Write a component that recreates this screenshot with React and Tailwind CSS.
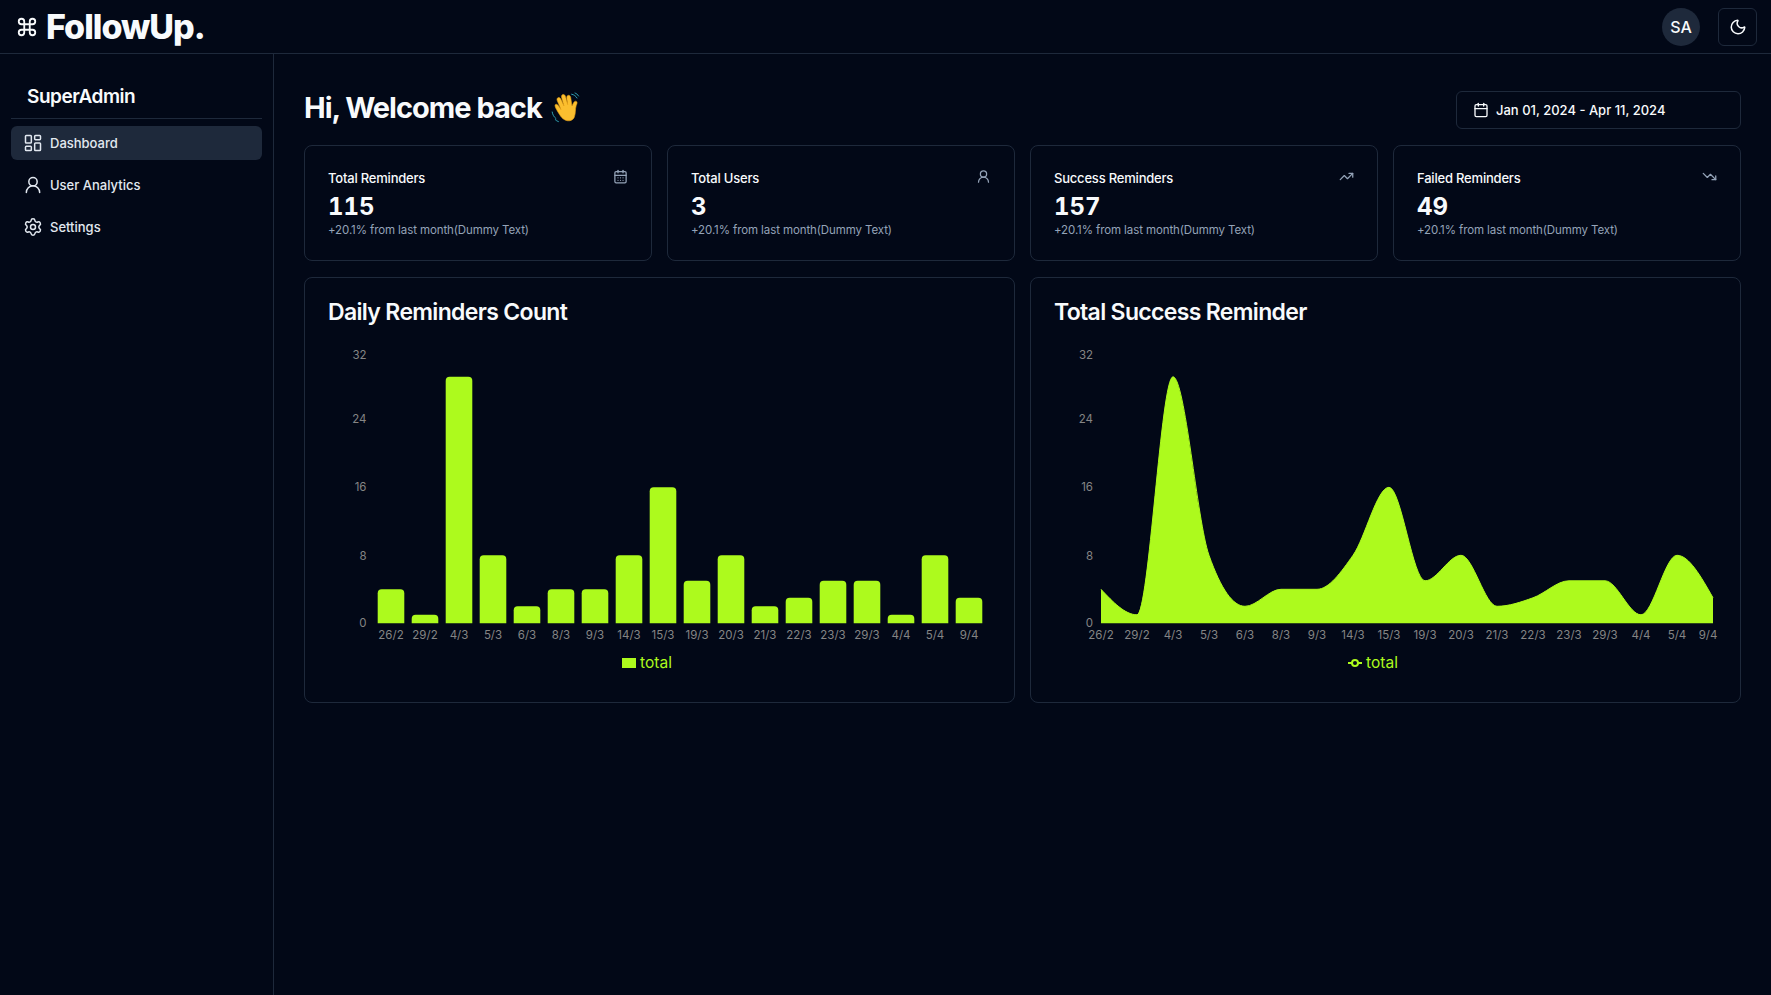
import React from "react";
import { Command, LayoutDashboard, UserRound, Settings, Moon, Calendar, CalendarDays, TrendingUp, TrendingDown } from "lucide-react";

const labels = ["26/2","29/2","4/3","5/3","6/3","8/3","9/3","14/3","15/3","19/3","20/3","21/3","22/3","23/3","29/3","4/4","5/4","9/4"];
const values = [4,1,29,8,2,4,4,8,16,5,8,2,3,5,5,1,8,3];
const BASE = 623.3;
const UNIT = 8.5;
const LIME = "#adfa1d";
const ticks = [["32",355],["24",419],["16",487],["8",556],["0",623]];

function monotonePath(pts) {
  const n = pts.length;
  const sign = (v) => (v < 0 ? -1 : 1);
  const t = new Array(n).fill(0);
  for (let i = 1; i < n - 1; i++) {
    const h0 = pts[i][0] - pts[i - 1][0];
    const h1 = pts[i + 1][0] - pts[i][0];
    const s0 = (pts[i][1] - pts[i - 1][1]) / h0;
    const s1 = (pts[i + 1][1] - pts[i][1]) / h1;
    const p = (s0 * h1 + s1 * h0) / (h0 + h1);
    t[i] = (sign(s0) + sign(s1)) * Math.min(Math.abs(s0), Math.abs(s1), 0.5 * Math.abs(p)) || 0;
  }
  const h = pts[1][0] - pts[0][0];
  t[0] = (3 * (pts[1][1] - pts[0][1]) / h - t[1]) / 2;
  t[n - 1] = (3 * (pts[n - 1][1] - pts[n - 2][1]) / h - t[n - 2]) / 2;
  let d = `M${pts[0][0]},${pts[0][1]}`;
  for (let i = 0; i < n - 1; i++) {
    const dx = (pts[i + 1][0] - pts[i][0]) / 3;
    d += `C${pts[i][0] + dx},${pts[i][1] + dx * t[i]},${pts[i + 1][0] - dx},${pts[i + 1][1] - dx * t[i + 1]},${pts[i + 1][0]},${pts[i + 1][1]}`;
  }
  return d;
}

function Wave() {
  return (
    <svg viewBox="0 0 30 32" className="w-[30px] h-[32px] ml-[9px] shrink-0" aria-hidden="true">
      <path d="M8.5 22.5 C5 17 3.5 14 4.2 12.8 C5 11.6 6.6 12.4 7.6 14 L10 17.6 L6.2 8.6 C5.6 7 6.4 5.8 7.5 5.6 C8.6 5.4 9.5 6.2 10.1 7.6 L13 14 L10.6 5.4 C10.2 3.8 10.9 2.7 12 2.5 C13.2 2.3 14.1 3.2 14.5 4.6 L16.7 12.6 L15.8 5.9 C15.6 4.4 16.4 3.4 17.5 3.3 C18.7 3.2 19.5 4.2 19.7 5.6 L21 14 C21.6 13 22.2 11.3 23.1 10 C24 8.8 25.4 8.9 25.9 9.9 C26.4 10.9 25.7 12.3 25.2 13.6 C24 17 25 21 23.2 25.4 C21 30.2 13 30.6 8.5 22.5 Z" fill="#fbbf2f" stroke="#e89f14" strokeWidth="0.6" />
      <path d="M1.2 20 C1.6 22.8 3 25 5 26.6 M4.2 27.6 C5.2 28.6 6.2 29.2 7.4 29.6" fill="none" stroke="#2f9fb0" strokeWidth="1" strokeLinecap="round" />
      <path d="M20.6 2.2 C23 2.6 25 4 26 6 M24 1 C25.5 1.6 26.8 2.6 27.6 4" fill="none" stroke="#2f9fb0" strokeWidth="1" strokeLinecap="round" />
    </svg>
  );
}

function YTicks({ x }) {
  return ticks.map(([t, y]) => (
    <text key={t} x={x} y={y} textAnchor="end" dominantBaseline="central" fontSize="11.5" fill="#858585">{t}</text>
  ));
}

function BarPlot() {
  return (
    <svg viewBox="328 340 663 306" className="block w-[663px] h-[306px]">
      <YTicks x={366.5} />
      {values.map((v, i) => {
        const cx = 391 + 34 * i;
        const top = BASE - v * UNIT;
        const r = Math.min(4, v * UNIT);
        const l = cx - 13.3;
        const rr = cx + 13.3;
        return (
          <g key={i}>
            <path d={`M${l},${BASE}V${top + r}Q${l},${top} ${l + r},${top}H${rr - r}Q${rr},${top} ${rr},${top + r}V${BASE}Z`} fill={LIME} />
            <text x={cx} y={635} textAnchor="middle" dominantBaseline="central" fontSize="11.5" fill="#858585">{labels[i]}</text>
          </g>
        );
      })}
    </svg>
  );
}

function AreaPlot() {
  const pts = values.map((v, i) => [1101 + 36 * i, BASE - v * UNIT]);
  const line = monotonePath(pts);
  return (
    <svg viewBox="1054 340 663 306" className="block w-[663px] h-[306px] overflow-visible">
      <YTicks x={1093} />
      <path d={`${line}L1713,${BASE}L1101,${BASE}Z`} fill={LIME} />
      <path d={line} fill="none" stroke={LIME} strokeWidth="1" />
      {labels.map((l, i) => (
        <text key={l} x={i === 17 ? 1708 : 1101 + 36 * i} y={635} textAnchor="middle" dominantBaseline="central" fontSize="11.5" fill="#858585">{l}</text>
      ))}
    </svg>
  );
}

function StatCard({ title, value, Icon }) {
  return (
    <div className="rounded-lg border border-[#1e293b] px-[23px] pt-[22px] pb-[22px] h-[116px]">
      <div className="flex items-center justify-between h-5">
        <span className="text-[13px] font-medium tracking-[-0.2px] text-[#f8fafc] pt-px">{title}</span>
        <Icon className="w-[15px] h-[15px] text-[#94a3b8] -mt-[3px]" strokeWidth={2} />
      </div>
      <div className="text-2xl font-bold tabular-nums text-[#f8fafc] leading-8 mt-[3px]">{value}</div>
      <p className="text-[11.5px] tracking-[-0.1px] text-[#94a3b8] leading-4 -mt-px">+20.1% from last month(Dummy Text)</p>
    </div>
  );
}

function ChartCard({ title, children, legendIcon }) {
  return (
    <div className="rounded-lg border border-[#1e293b] h-[426px] pl-[23px] pt-[18px]">
      <h3 className="text-[23px] font-semibold tracking-[-0.67px] text-[#f8fafc] leading-8">{title}</h3>
      <div className="mt-[12px]">{children}</div>
      <div className="flex items-center justify-center gap-1 w-[663px] pr-[25px] h-6 mt-[5px]">
        {legendIcon}
        <span className="text-[15.5px] text-[#adfa1d] leading-6">total</span>
      </div>
    </div>
  );
}

function NavItem({ Icon, label, active }) {
  return (
    <div className={`flex items-center gap-[7px] h-[34px] px-[12px] rounded-md text-[13px] font-medium text-[#e2e8f0] ${active ? "bg-[#1e293b]" : ""}`}>
      <Icon className="w-[20px] h-[20px]" strokeWidth={1.8} />
      <span className="pt-px">{label}</span>
    </div>
  );
}

export default function App() {
  return (
    <div className="h-[995px] bg-[#020817] text-[#f8fafc] flex flex-col overflow-hidden" style={{ fontFamily: "Inter, 'Noto Sans', sans-serif" }}>
      <header className="h-[54px] shrink-0 border-b border-[#1e293b] flex items-center justify-between pl-[16px] pr-[14px]">
        <div className="flex items-center gap-[8px]">
          <Command className="w-[22px] h-[22px] text-[#f8fafc]" strokeWidth={2} />
          <span className="text-[34px] font-extrabold tracking-[-1px] leading-none">FollowUp.</span>
        </div>
        <div className="flex items-center gap-[18px]">
          <div className="w-[38px] h-[38px] rounded-full bg-[#1e293b] flex items-center justify-center text-base font-medium text-[#f8fafc]">SA</div>
          <div className="w-[39px] h-[38px] rounded-md border border-[#1e293b] flex items-center justify-center">
            <Moon className="w-[18px] h-[18px] text-[#f8fafc]" strokeWidth={2} />
          </div>
        </div>
      </header>
      <div className="flex flex-1 min-h-0">
        <aside className="w-[274px] shrink-0 border-r border-[#1e293b] px-[11px]">
          <div className="h-[65px] border-b border-[#1e293b] flex items-end pb-[7px] pl-[16px]">
            <span className="text-[19px] font-semibold tracking-tight text-[#f8fafc]">SuperAdmin</span>
          </div>
          <nav className="mt-[7px] flex flex-col gap-2">
            <NavItem Icon={LayoutDashboard} label="Dashboard" active />
            <NavItem Icon={UserRound} label="User Analytics" />
            <NavItem Icon={Settings} label="Settings" />
          </nav>
        </aside>
        <main className="flex-1 min-w-0 px-[30px]">
          <div className="flex items-center justify-between mt-[37px] h-[38px]">
            <div className="flex items-center pb-[4px]">
              <h2 className="text-[29px] font-bold tracking-[-1px] text-[#f8fafc]">Hi, Welcome back</h2>
              <Wave />
            </div>
            <div className="w-[285px] h-[38px] rounded-md border border-[#1e293b] flex items-center pl-4 gap-[7px] text-[13px] font-medium text-[#f8fafc]">
              <Calendar className="w-[16px] h-[16px]" strokeWidth={2} />
              <span className="pt-px">Jan 01, 2024 - Apr 11, 2024</span>
            </div>
          </div>
          <div className="grid grid-cols-4 gap-[15px] mt-[16px]">
            <StatCard title="Total Reminders" value="115" Icon={CalendarDays} />
            <StatCard title="Total Users" value="3" Icon={UserRound} />
            <StatCard title="Success Reminders" value="157" Icon={TrendingUp} />
            <StatCard title="Failed Reminders" value="49" Icon={TrendingDown} />
          </div>
          <div className="grid grid-cols-2 gap-[15px] mt-[16px]">
            <ChartCard
              title="Daily Reminders Count"
              legendIcon={<span className="w-[14px] h-[10px] bg-[#adfa1d] inline-block" />}
            >
              <BarPlot />
            </ChartCard>
            <ChartCard
              title="Total Success Reminder"
              legendIcon={
                <svg viewBox="0 0 14 14" className="w-[14px] h-[14px]">
                  <line x1="0" y1="7" x2="14" y2="7" stroke={LIME} strokeWidth="2" />
                  <circle cx="7" cy="7" r="3" fill="#020817" stroke={LIME} strokeWidth="2" />
                </svg>
              }
            >
              <AreaPlot />
            </ChartCard>
          </div>
        </main>
      </div>
    </div>
  );
}
